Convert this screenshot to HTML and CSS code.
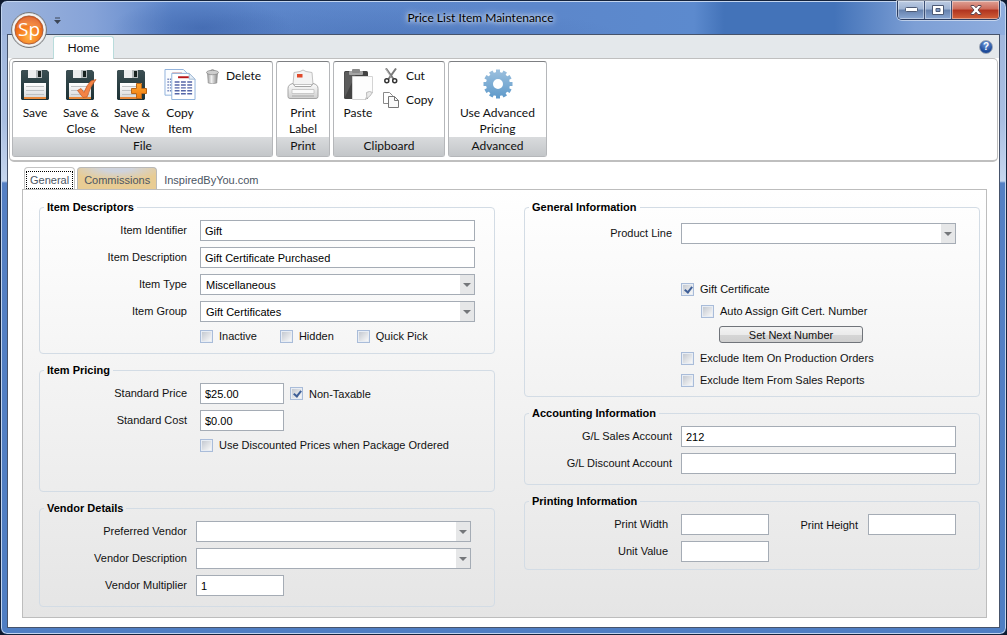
FILE: index.html
```html
<!DOCTYPE html>
<html lang="en">
<head>
<meta charset="utf-8">
<title>Price List Item Maintenance</title>
<link rel="stylesheet" href="styles.css">
</head>
<body>
<svg class="defs" aria-hidden="true">
  <defs>
    <linearGradient id="disk" x1="0" y1="0" x2="0" y2="1"><stop offset="0" stop-color="#3c4f53"/><stop offset=".5" stop-color="#2a3f43"/><stop offset="1" stop-color="#1d3236"/></linearGradient>
    <linearGradient id="label" x1="0" y1="0" x2="0" y2="1"><stop offset="0" stop-color="#ffffff"/><stop offset="1" stop-color="#d9dbdc"/></linearGradient>
    <linearGradient id="orange" x1="0" y1="0" x2="0" y2="1"><stop offset="0" stop-color="#ffa62e"/><stop offset="1" stop-color="#f07a10"/></linearGradient>
    <linearGradient id="steel" x1="0" y1="0" x2="1" y2="0"><stop offset="0" stop-color="#a0a0a0"/><stop offset=".4" stop-color="#f0f0f0"/><stop offset="1" stop-color="#8a8a8a"/></linearGradient>
    <linearGradient id="gear" gradientUnits="userSpaceOnUse" x1="0" y1="-14" x2="0" y2="14"><stop offset="0" stop-color="#9cc0de"/><stop offset="1" stop-color="#5f9aca"/></linearGradient>
    <linearGradient id="body" x1="0" y1="0" x2="0" y2="1"><stop offset="0" stop-color="#fdfdfd"/><stop offset="1" stop-color="#cfcfcf"/></linearGradient>
    <radialGradient id="orb" cx=".5" cy=".75" r=".7"><stop offset="0" stop-color="#ffb347"/><stop offset=".6" stop-color="#f4761c"/><stop offset="1" stop-color="#dd5210"/></radialGradient>
    <symbol id="floppy" viewBox="0 0 28 30">
      <path d="M1 0h25l2 2v27l-1 1H1l-1-1V1z" fill="url(#disk)"/>
      <rect x="7" y="0" width="14" height="8" fill="#b4babc"/>
      <rect x="7" y="0" width="8" height="8" fill="#eceeef"/>
      <rect x="17" y="1" width="3" height="6" fill="#17211f"/>
      <path d="M3 13h22v14H3z" fill="url(#label)"/>
      <path d="M5 16.500h18M5 20.500h18M5 24.500h18" stroke="#bfc2c4"/>
      <rect x="3" y="27" width="22" height="2" fill="#e88a3c"/>
    </symbol>
  </defs>
</svg>
<div class="window">
  <header class="titlebar">
    <button class="quick" type="button" aria-label="Customize toolbar"><svg width="7" height="7" viewBox="0 0 7 7"><path d="M1 1h5" stroke="#3c4656"/><path d="M0 3h7L3.500 7z" fill="#3c4656"/></svg></button>
    <h1 class="title">Price List Item Maintenance</h1>
    <div class="controls">
      <button class="control" type="button" aria-label="Minimize"><svg width="13" height="6" viewBox="0 0 13 6"><rect x=".5" y=".5" width="12" height="4" rx="1" fill="#fff" stroke="#4d5a75"/></svg></button>
      <button class="control" type="button" aria-label="Maximize"><svg width="12" height="10" viewBox="0 0 12 10"><path d="M.5.5h11v9H.5z" fill="#fff" stroke="#4d5a75"/><path d="M4 3.500h4v3H4z" fill="#7e98c4" stroke="#4d5a75"/></svg></button>
      <button class="control close" type="button" aria-label="Close"><svg width="12" height="10" viewBox="0 0 12 10"><path d="M1 .5h3l2 2.300L8 .5h3v1L8 5l3 3.500v1H8L6 7.200 4 9.500H1v-1L4 5 1 1.500z" fill="#fff" stroke="#5a4550"/></svg></button>
    </div>
  </header>
  <button class="orb" type="button" aria-label="Application menu">
    <svg width="38" height="38" viewBox="0 0 38 38"><circle cx="19" cy="19" r="17.500" fill="#dcdcdc" stroke="#77797c"/><circle cx="19" cy="19" r="15.500" fill="none" stroke="#f6f6f6" stroke-width="1.500"/><circle cx="19" cy="19" r="14" fill="url(#orb)" stroke="#b2603a"/><path d="M7 17a12 11 0 0 1 24 0q-12-5-24 0z" fill="#fff" opacity=".18"/></svg>
    <span class="orb-text">Sp</span>
  </button>
  <div class="client">
    <nav class="ribbon-tabs">
      <a class="ribbon-tab" href="#home">Home</a>
      <button class="help" type="button" aria-label="Help">?</button>
    </nav>
    <div class="ribbon">
      <section class="group">
        <div class="tools">
          <button class="tool w44" type="button"><svg width="28" height="31"><use href="#floppy" y="1" width="28" height="30"/></svg>Save</button>
          <button class="tool w48" type="button"><svg width="32" height="31"><use href="#floppy" x="1" y="1" width="28" height="30"/><path d="M12.500 21.500l3.500-2 3 4q3-8 7-11.500l5-1.500q-6 7-9 17.500l-4 .5z" fill="#f58345" stroke="#c8602c" stroke-width=".8"/></svg>Save &amp;<br>Close</button>
          <button class="tool w54" type="button"><svg width="32" height="31"><use href="#floppy" x="1" y="1" width="28" height="30"/><path d="M20.500 14.500h5v5h5v5h-5v5h-5v-5h-5v-5h5z" fill="url(#orange)" stroke="#b8661a"/></svg>Save &amp;<br>New</button>
          <button class="tool w42" type="button"><svg width="32" height="31" viewBox="0 0 32 32">
            <path d="M.5.500h19l5 5V27H.5z" fill="#fbfdff" stroke="#8fb2dc"/><path d="M8 4.500h10" stroke="#c55" stroke-width="1.500"/><path d="M3 10.500h4M3 13.500h4M3 16.500h4M3 19.500h4M3 22.500h4" stroke="#6f80b8" stroke-width="1.500" stroke-dasharray="1.500 1"/>
            <path d="M7.500 4.500h18l6 6v21h-24z" fill="#fff" stroke="#8fb2dc"/><path d="M25.500 4.500v6h6z" fill="#e6eef7" stroke="#a3bbd6"/><path d="M14 8.500h11" stroke="#b8161c" stroke-width="2"/><path d="M10.500 13.500h18M10.500 16.500h18M10.500 19.500h18M10.500 22.500h18M10.500 25.500h18" stroke="#5566a8" stroke-width="1.500" stroke-dasharray="5 1.500"/></svg>Copy<br>Item</button>
          <div class="small-tools delete">
            <button class="small-tool" type="button"><svg width="13" height="15" viewBox="0 0 13 15"><path d="M1.500 4h10l-.7 10q-4.300 1.500-8.600 0z" fill="url(#steel)" stroke="#8a8a8a" stroke-width=".6"/><ellipse cx="6.500" cy="3.500" rx="6" ry="2.200" fill="#cecece" stroke="#858585" stroke-width=".7"/><path d="M4.500 1.500q2-1.500 4 0" fill="none" stroke="#888"/></svg>Delete</button>
          </div>
        </div>
        <h2 class="caption">File</h2>
      </section>
      <section class="group">
        <div class="tools">
          <button class="tool w52" type="button"><svg width="32" height="31" viewBox="0 0 32 30"><path d="M7 3l6-1q3-3 6 0l6 1 1 12H6z" fill="#f3f3f3" stroke="#c2c2c2"/><rect x="10" y="4.500" width="5.500" height="3.500" fill="#e0492a"/><path d="M1 19q0-4 5-5l2 3h16l2-3q5 1 5 5v8q0 2-2 2H3q-2 0-2-2z" fill="url(#body)" stroke="#a5a5a5"/><path d="M5 20h22v4H5z" fill="#fafafa" stroke="#c0c0c0" stroke-width=".8"/><path d="M5 26.500h22" stroke="#aaa"/></svg>Print<br>Label</button>
        </div>
        <h2 class="caption">Print</h2>
      </section>
      <section class="group">
        <div class="tools">
          <button class="tool w48" type="button"><svg width="30" height="31" viewBox="0 0 30 31"><rect x="1" y="2" width="24" height="28" rx="1.500" fill="#434343"/><path d="M1.500 29L14 3H3Q1.500 3 1.500 5z" fill="#5c5c5c"/><rect x="6" y="2" width="14" height="4" rx="1" fill="#a4a4a4"/><rect x="9" y="0" width="8" height="4" rx="1" fill="#8a8a8a"/><path d="M9.500 7.500h20v16q-3 1-7 7h-13z" fill="#fdfdfd" stroke="#d4d4d4"/><path d="M29.500 23.500q-3-2-6 0 1 4-1 7 5-3 7-7z" fill="#e9e9e9" stroke="#bbb"/></svg>Paste</button>
          <div class="small-tools edit">
            <button class="small-tool" type="button"><svg width="16" height="16" viewBox="0 0 16 16"><path d="M3 .5L10.500 11M13 .5L5.500 11" stroke="#7a7a7a" stroke-width="2"/><path d="M2.500.5l5 8" stroke="#bbb"/><circle cx="3.800" cy="12.700" r="2" fill="none" stroke="#333" stroke-width="1.500"/><circle cx="11.700" cy="12.700" r="2" fill="none" stroke="#333" stroke-width="1.500"/></svg>Cut</button>
            <button class="small-tool" type="button"><svg width="16" height="16" viewBox="0 0 16 16"><path d="M.5.500h6l3 3v8h-9z" fill="#fff" stroke="#8a8a8a"/><path d="M5.500 4.500h6l4 4v7h-10z" fill="#fafafa" stroke="#777"/><path d="M11.500 4.500v4h4" fill="none" stroke="#777"/></svg>Copy</button>
          </div>
        </div>
        <h2 class="caption">Clipboard</h2>
      </section>
      <section class="group">
        <div class="tools">
          <button class="tool w97" type="button"><svg width="30" height="31" viewBox="-15 -15 30 31"><path fill="url(#gear)" fill-rule="evenodd" d="M0-12A12 12 0 1 0 0 12 12 12 0 1 0 0-12zM0-5A5 5 0 1 1 0 5 5 5 0 1 1 0-5z"/><path d="M0-14.500V-10M7.250-12.600L5-8.700M12.600-7.250L8.700-5M14.500 0H10M-7.250-12.600L-5-8.700M-12.600-7.250L-8.700-5M-14.500 0H-10M0 14.500V10M7.250 12.600L5 8.700M12.600 7.250L8.700 5M-7.250 12.600L-5 8.700M-12.600 7.250L-8.700 5" stroke="url(#gear)" stroke-width="4"/></svg>Use Advanced<br>Pricing</button>
        </div>
        <h2 class="caption">Advanced</h2>
      </section>
    </div>
    <main class="workspace">
      <div class="tabs" role="tablist">
        <button class="tab active" type="button" role="tab" aria-selected="true"><span class="focus">General</span></button>
        <button class="tab hot" type="button" role="tab">Commissions</button>
        <button class="tab" type="button" role="tab">InspiredByYou.com</button>
      </div>
      <form class="panel">
        <div class="column">
          <fieldset class="box descriptors">
            <legend>Item Descriptors</legend>
            <label for="ident">Item Identifier</label><input class="field" id="ident" type="text" value="Gift">
            <label for="desc">Item Description</label><input class="field" id="desc" type="text" value="Gift Certificate Purchased">
            <label for="type">Item Type</label><span class="combo"><select class="field" id="type"><option>Miscellaneous</option></select></span>
            <label for="grp">Item Group</label><span class="combo"><select class="field" id="grp"><option>Gift Certificates</option></select></span>
            <div class="checks"><label class="check"><input type="checkbox">Inactive</label><label class="check"><input type="checkbox">Hidden</label><label class="check"><input type="checkbox">Quick Pick</label></div>
          </fieldset>
          <fieldset class="box pricing">
            <legend>Item Pricing</legend>
            <label for="price">Standard Price</label><div class="inline"><input class="field narrow" id="price" type="text" value="$25.00"><label class="check"><input type="checkbox" checked>Non-Taxable</label></div>
            <label for="cost">Standard Cost</label><input class="field narrow" id="cost" type="text" value="$0.00">
            <div class="checks"><label class="check"><input type="checkbox">Use Discounted Prices when Package Ordered</label></div>
          </fieldset>
          <fieldset class="box vendor">
            <legend>Vendor Details</legend>
            <label for="pref">Preferred Vendor</label><span class="combo"><select class="field" id="pref"><option></option></select></span>
            <label for="vdesc">Vendor Description</label><span class="combo"><select class="field" id="vdesc"><option></option></select></span>
            <label for="mult">Vendor Multiplier</label><input class="field medium" id="mult" type="text" value="1">
          </fieldset>
        </div>
        <div class="column">
          <fieldset class="box general">
            <legend>General Information</legend>
            <label for="line">Product Line</label><span class="combo"><select class="field" id="line"><option></option></select></span>
            <div class="options">
              <label class="check"><input type="checkbox" checked>Gift Certificate</label>
              <label class="check nested"><input type="checkbox">Auto Assign Gift Cert. Number</label>
              <button class="push" type="button">Set Next Number</button>
              <label class="check"><input type="checkbox">Exclude Item On Production Orders</label>
              <label class="check"><input type="checkbox">Exclude Item From Sales Reports</label>
            </div>
          </fieldset>
          <fieldset class="box accounting">
            <legend>Accounting Information</legend>
            <label for="sales">G/L Sales Account</label><input class="field" id="sales" type="text" value="212">
            <label for="disc">G/L Discount Account</label><input class="field" id="disc" type="text">
          </fieldset>
          <fieldset class="box printing">
            <legend>Printing Information</legend>
            <label for="pw">Print Width</label><div class="inline spread"><input class="field medium" id="pw" type="text"><span class="pair"><label for="ph">Print Height</label><input class="field medium" id="ph" type="text"></span></div>
            <label for="uv">Unit Value</label><input class="field medium" id="uv" type="text">
          </fieldset>
        </div>
      </form>
    </main>
  </div>
</div>
</body>
</html>
```
FILE: styles.css
```css
* { box-sizing: border-box; }
body { margin: 0; background: #0f1a2e; font: 11px/14px "Liberation Sans", Arial, sans-serif; color: #111; }
button { font: inherit; color: inherit; padding: 0; border: 0; background: none; }
.defs { position: absolute; width: 0; height: 0; }

.window {
  position: relative;
  min-height: 100vh;
  display: flex;
  flex-direction: column;
  padding: 0 6px 6px;
  border: 1px solid #14233c;
  border-radius: 7px;
  box-shadow: inset 0 0 0 1px #c3d5ef;
  background: linear-gradient(180deg, #9db4dc 0, #a9bfe2 120px, #c6d6ee 180px, #5580c4 182px, #4f7ec3 100%);
}
.window::before {
  content: "";
  position: absolute;
  inset: 1px;
  height: 33px;
  border-radius: 6px 6px 0 0;
  background:
    radial-gradient(ellipse 90px 30px at 200px 26px, rgba(50,88,160,.5), transparent),
    radial-gradient(ellipse 240px 30px at 380px 34px, rgba(60,100,170,.35), transparent),
    linear-gradient(90deg, #9db4dc 0, #86a3d8 9%, #5d86ca 17%, #5c87cb 55%, #5c8ace 69%, #4373b9 72%, #4373b9 83%, #7d9fd5 91%, #8fadde 100%);
}
.titlebar { position: relative; display: grid; grid-template-columns: 1fr auto 1fr; height: 33px; }
.title { margin: 0; padding: 9px 46px 0 0; font: 12px/16px Lato, sans-serif; color: #000; text-shadow: 0 0 4px #fff, 0 0 8px #fff; }
.quick { justify-self: start; align-self: start; margin: 16px 0 0 47px; line-height: 0; }
.controls { justify-self: end; align-self: start; display: flex; height: 19px; border: 1px solid #2c3d60; border-top: 0; border-radius: 0 0 5px 5px; box-shadow: 0 0 0 1px rgba(255,255,255,.5); overflow: hidden; }
.control { width: 27px; display: flex; align-items: center; justify-content: center; border-right: 1px solid #3d4f74; background: linear-gradient(#bccbe2 0, #9eb3d3 45%, #6681ad 50%, #8ba8d3 100%); box-shadow: inset 0 0 0 1px rgba(255,255,255,.4); }
.close { width: 47px; border-right: 0; background: linear-gradient(#dfa195 0, #cc6a59 45%, #b0331f 50%, #d2613a 100%); }

.orb { position: absolute; left: 9px; top: 10px; width: 38px; height: 38px; z-index: 2; }
.orb svg { display: block; }
.orb-text { position: absolute; inset: 0; text-align: center; font: 19px/36px "Open Sans", sans-serif; color: #fff; }

.client { position: relative; flex: 1; display: flex; flex-direction: column; border: 1px solid #46536b; background: #fff; }
.ribbon-tabs { display: flex; justify-content: space-between; padding: 1px 6px 0 45px; height: 23px; background: #e4e8eb; font: 12px/22px Lato, sans-serif; }
.ribbon-tab { position: relative; z-index: 1; width: 61px; height: 23px; text-align: center; color: #111; text-decoration: none; background: #fff; border: 1px solid #b9dcdc; border-bottom: 0; border-radius: 3px 3px 0 0; }
.help { align-self: center; width: 14px; height: 14px; border: 1px solid #98a3b3; border-radius: 50%; background: radial-gradient(circle at 50% 25%, #6f9bdd, #1d4a99 70%); color: #fff; font: bold 10px/12px "Liberation Sans", sans-serif; }

.ribbon { display: flex; gap: 3px; padding: 2px 2px 3px; border: 1px solid #bfbfbf; border-bottom-width: 2px; border-radius: 5px; margin: 0 1px; background: #fff; font: 12px/16px Lato, sans-serif; }
.group { display: flex; flex-direction: column; border: 1px solid #b5b7ba; border-top-color: #7d7f82; border-radius: 3px; }
.tools { display: flex; height: 75px; }
.tool { display: flex; flex-direction: column; align-items: center; justify-content: flex-start; gap: 5px; padding-top: 7px; text-align: center; white-space: nowrap; }
.tool svg { flex: none; }
.w42 { width: 42px; } .w44 { width: 44px; } .w48 { width: 48px; } .w52 { width: 52px; } .w54 { width: 54px; } .w97 { width: 97px; }
.small-tools { display: flex; flex-direction: column; gap: 8px; padding: 6px 0 0 1px; }
.delete { width: 71px; padding-left: 5px; }
.edit { width: 62px; }
.small-tool { display: flex; align-items: center; gap: 7px; height: 16px; }
.caption { margin: 0; height: 19px; text-align: center; font: inherit; line-height: 18px; background: linear-gradient(#d9dbdd, #c3c6c9); }

.workspace { flex: 1; display: flex; flex-direction: column; padding: 5px 12px 9px 14px; }
.tabs { display: flex; align-items: flex-end; height: 22px; padding-left: 2px; line-height: 16px; color: #4b5563; }
.tab { height: 22px; padding: 2px 6px 0; border: 1px solid transparent; border-bottom: 0; border-radius: 4px 4px 0 0; }
.tab.active { padding: 2px 1px 0; border-color: #c4c4c4; background: #fff; margin-right: 2px; }
.tab.hot { border-color: #b9b9b9; background: radial-gradient(ellipse 60% 60% at 50% 0, #cfd3dc 30%, transparent), #e8cc94; }
.focus { display: block; border: 1px dotted #000; padding: 0 3px; }

.panel { flex: 1; display: grid; grid-template-columns: 1fr 1fr; gap: 29px; padding: 10px 6px 10px 16px; border: 1px solid #bdbdbd; background: linear-gradient(#fff, #e5e5e5); }
.column { display: flex; flex-direction: column; gap: 9px; min-width: 0; }
.box { min-width: 0; margin: 0; border: 1px solid #d3dce5; border-radius: 4px; display: grid; align-content: start; grid-template-columns: 147px 1fr; gap: 6px 13px; padding: 6px 19px 9px 0; }
.box > label { text-align: right; line-height: 21px; white-space: nowrap; }
legend { margin-left: 4px; padding: 0 3px; font-weight: bold; line-height: 14px; color: #000; }
.field { width: 100%; height: 21px; margin: 0; padding: 0 4px; border: 1px solid #a5acb5; border-radius: 0; background: #fff; color: #000; font: inherit; appearance: none; }
.narrow { width: 84px; }
.medium { width: 88px; }
.combo { position: relative; display: flex; }
.combo::before { content: ""; position: absolute; right: 1px; top: 1px; bottom: 1px; width: 14px; background: #e6e7e8; pointer-events: none; }
.combo::after { content: ""; position: absolute; right: 4px; top: 9px; border: 4px solid transparent; border-top-color: #74777a; border-bottom: 0; pointer-events: none; }
.combo .field { padding-left: 5px; }

.check { display: inline-flex; align-items: center; gap: 6px; height: 14px; white-space: nowrap; }
.check input { position: relative; appearance: none; flex: none; width: 13px; height: 13px; margin: 0; border: 1px solid #a9bcd9; background: linear-gradient(135deg, #c4c9d1, #f8f8f8) content-box, #fff; padding: 1px; box-shadow: inset 0 0 0 1px #e8edf4; }
.check input:checked::after { content: ""; position: absolute; left: 4px; top: 1px; width: 3px; height: 6px; border: solid #3f5f97; border-width: 0 2px 2px 0; transform: rotate(38deg); }
.checks { grid-column: 2; display: flex; gap: 23px; padding-top: 1px; }
.inline { display: flex; align-items: center; gap: 6px; }
.pair { display: flex; align-items: center; gap: 10px; }
.spread { justify-content: space-between; }
.descriptors { padding-bottom: 10px; }
.pricing { padding-bottom: 39px; }
.vendor, .general, .accounting { column-gap: 9px; padding-right: 23px; padding-bottom: 10px; }
.general { padding-top: 9px; padding-bottom: 9px; }
.printing { grid-template-columns: 143px 1fr; padding-right: 23px; padding-bottom: 7px; }
.options { grid-column: 2; display: flex; flex-direction: column; align-items: flex-start; gap: 8px; padding-top: 32px; }
.nested { margin-left: 20px; }
.push { width: 144px; height: 17px; margin-left: 38px; border: 1px solid #70747a; border-radius: 3px; background: linear-gradient(#f3f3f3 0, #ebebeb 50%, #d6d6d6 51%, #cfcfcf 100%); }
```
